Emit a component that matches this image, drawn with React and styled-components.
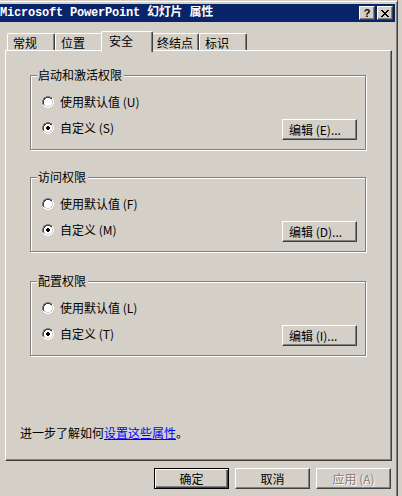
import React, { useState } from 'react';
import styled, { createGlobalStyle, css } from 'styled-components';

const GlobalStyle = createGlobalStyle`
  html, body {
    margin: 0;
    padding: 0;
    background: #d4d0c8;
    overflow: hidden;
  }
  body {
    font-family: "Noto Sans CJK SC", "Liberation Sans", sans-serif;
    font-size: 12px;
    color: #000;
  }
`;

const raised = css`
  border: 1px solid;
  border-color: #ffffff #404040 #404040 #ffffff;
  box-shadow: inset -1px -1px 0 #808080, inset 1px 1px 0 #d4d0c8;
`;

const GROUPS = [
  { title: '启动和激活权限', def: 'U', custom: 'S', edit: 'E', top: 24 },
  { title: '访问权限', def: 'F', custom: 'M', edit: 'D', top: 27 },
  { title: '配置权限', def: 'L', custom: 'T', edit: 'I', top: 29 },
];

const TABS = ['常规', '位置', '安全', '终结点', '标识'];

function Radio({ checked }) {
  return (
    <RadioIcon width="12" height="12" viewBox="0 0 12 12">
      <path d="M4 0h4v1H4zM2 1h2v1H2zM8 1h2v1H8zM1 2h1v2H1zM0 4h1v4H0zM1 8h1v1H1z" fill="#808080" />
      <path d="M4 1h4v1H4zM2 2h2v1H2zM8 2h2v1H8zM2 3h1v1H2zM1 4h1v4H1zM2 8h0z" fill="#404040" />
      <path d="M10 2h1v2h-1zM11 4h1v4h-1zM10 8h1v2h-1zM8 10h2v1H8zM4 11h4v1H4zM2 10h2v1H2zM1 9h1v1H1z" fill="#ffffff" />
      <path d="M10 4h1v4h-1zM9 8h1v1H9zM8 9h2v1H8zM4 10h4v1H4zM2 9h2v1H2z" fill="#d4d0c8" />
      <path d="M4 2h4v1h1v1h1v4h-1v1h-1v1H4V9H3V8H2V4h1V3h1z" fill="#ffffff" />
      {checked && <path d="M5 4h2v1h1v2H7v1H5V7H4V5h1z" fill="#000000" />}
    </RadioIcon>
  );
}

function PermissionGroup({ group }) {
  return (
    <Group $top={group.top}>
      <GroupLabel>{group.title}</GroupLabel>
      <Row>
        <Option>
          <Radio />
          <span>使用默认值 ({group.def})</span>
        </Option>
      </Row>
      <Row $second>
        <Option>
          <Radio checked />
          <span>自定义 ({group.custom})</span>
        </Option>
        <EditButton>编辑 ({group.edit})...</EditButton>
      </Row>
    </Group>
  );
}

export default function App() {
  const [activeTab, setActiveTab] = useState('安全');

  return (
    <>
      <GlobalStyle />
      <Window>
        <TitleBar>
          <Title>Microsoft PowerPoint 幻灯片 属性</Title>
          <CaptionButtons>
            <CaptionButton>?</CaptionButton>
            <CaptionButton>
              <svg width="8" height="7" viewBox="0 0 8 7">
                <path d="M0 0h2v1h1v1h2V1h1V0h2v1H7v1H6v1H5v1h1v1h1v1h1v1H6V6H5V5H3v1H2v1H0V6h1V5h1V4h1V3H2V2H1V1H0z" fill="#000" />
              </svg>
            </CaptionButton>
          </CaptionButtons>
        </TitleBar>

        <Body>
          <TabStrip>
            {TABS.map((tab) => (
              <Tab
                key={tab}
                $active={activeTab === tab}
                onClick={() => setActiveTab(tab)}
              >
                {tab}
              </Tab>
            ))}
          </TabStrip>

          <Panel>
            {GROUPS.map((group) => (
              <PermissionGroup key={group.title} group={group} />
            ))}
            <HelpText>
              进一步了解如何<HelpLink href="#">设置这些属性</HelpLink>。
            </HelpText>
          </Panel>

          <ButtonRow>
            <DialogButton $default>确定</DialogButton>
            <DialogButton>取消</DialogButton>
            <DialogButton disabled>应用 (A)</DialogButton>
          </ButtonRow>
        </Body>
      </Window>
    </>
  );
}

const Window = styled.div`
  box-sizing: border-box;
  width: 402px;
  height: 520px;
  margin-left: -4px;
  padding: 3px 2px 0 3px;
  border: 1px solid;
  border-color: #d4d0c8 #404040 #404040 #d4d0c8;
  box-shadow: inset 1px 1px 0 #ffffff, inset -1px -1px 0 #808080;
  background: #d4d0c8;
`;

const TitleBar = styled.div`
  display: flex;
  align-items: center;
  justify-content: space-between;
  height: 18px;
  background: #0a246a;
  padding-right: 2px;
`;

const Title = styled.div`
  font-family: "Liberation Mono", "Noto Sans CJK SC", monospace;
  font-weight: bold;
  font-size: 12px;
  letter-spacing: -0.2px;
  color: #ffffff;
  white-space: nowrap;
  line-height: 18px;
`;

const CaptionButtons = styled.div`
  display: flex;
  gap: 2px;
`;

const CaptionButton = styled.div`
  ${raised};
  box-sizing: border-box;
  width: 16px;
  height: 14px;
  background: #d4d0c8;
  display: flex;
  align-items: center;
  justify-content: center;
  font-family: "Liberation Sans", sans-serif;
  font-weight: bold;
  font-size: 11px;
  line-height: 12px;
`;

const Body = styled.div`
  padding: 9px 3px 0 5px;
`;

const TabStrip = styled.div`
  display: flex;
  align-items: flex-end;
  height: 19px;
  padding-left: 2px;
`;

const Tab = styled.div`
  box-sizing: border-box;
  width: 48px;
  height: 17px;
  padding: 2px 0 0 5px;
  line-height: 13px;
  border-top: 1px solid #ffffff;
  border-left: 1px solid #ffffff;
  border-right: 1px solid #404040;
  border-top-left-radius: 2px;
  border-top-right-radius: 2px;
  box-shadow: inset -1px 0 0 #808080;
  background: #d4d0c8;
  cursor: default;

  ${({ $active }) =>
    $active &&
    css`
      position: relative;
      z-index: 1;
      width: 52px;
      height: 21px;
      margin: 0 -2px -2px;
      padding: 2px 0 0 7px;
    `}
`;

const Panel = styled.div`
  box-sizing: border-box;
  height: 411px;
  display: flex;
  flex-direction: column;
  padding: 0 0 21px 24px;
  border: 1px solid;
  border-color: #ffffff #404040 #404040 #ffffff;
  box-shadow: inset -1px -1px 0 #808080;
`;

const Group = styled.div`
  box-sizing: border-box;
  width: 336px;
  height: 75px;
  margin-top: ${({ $top }) => $top}px;
  padding: 0 8px 0 11px;
  border: 1px solid #808080;
  box-shadow: inset 1px 1px 0 #ffffff, 1px 1px 0 #ffffff;
  display: flex;
  flex-direction: column;
`;

const GroupLabel = styled.div`
  align-self: flex-start;
  margin: -7px 0 0 -5px;
  padding: 0 2px 0 1px;
  line-height: 12px;
  height: 13px;
  background: #d4d0c8;
`;

const Row = styled.div`
  display: flex;
  align-items: flex-start;
  justify-content: space-between;
  height: 20px;
  margin-top: ${({ $second }) => ($second ? '6px' : '10px')};
`;

const Option = styled.label`
  display: flex;
  align-items: center;
  gap: 6px;
  height: 20px;
  line-height: 20px;
`;

const RadioIcon = styled.svg`
  display: block;
  flex-shrink: 0;
`;

const EditButton = styled.button`
  ${raised};
  box-sizing: border-box;
  width: 75px;
  height: 21px;
  margin-top: 1px;
  padding: 0 0 0 6px;
  background: #d4d0c8;
  font: inherit;
  font-size: 12px;
  line-height: 18px;
  text-align: left;
  color: #000;
`;

const HelpText = styled.div`
  margin: auto 0 0 -10px;
  line-height: 13px;
`;

const HelpLink = styled.a`
  color: #0000ff;
  text-decoration: underline;
`;

const ButtonRow = styled.div`
  display: flex;
  justify-content: flex-end;
  gap: 6px;
  margin-top: 7px;
  padding-right: 1px;
`;

const DialogButton = styled.button`
  ${raised};
  box-sizing: border-box;
  width: 75px;
  height: 21px;
  padding: 0;
  background: #d4d0c8;
  font: inherit;
  font-size: 12px;
  line-height: 18px;
  color: #000;

  ${({ $default }) =>
    $default &&
    css`
      border: 1px solid #000;
      box-shadow: inset 1px 1px 0 #ffffff, inset -1px -1px 0 #404040,
        inset -2px -2px 0 #808080;
    `}

  &:disabled {
    color: #808080;
    text-shadow: 1px 1px 0 #ffffff;
  }
`;
